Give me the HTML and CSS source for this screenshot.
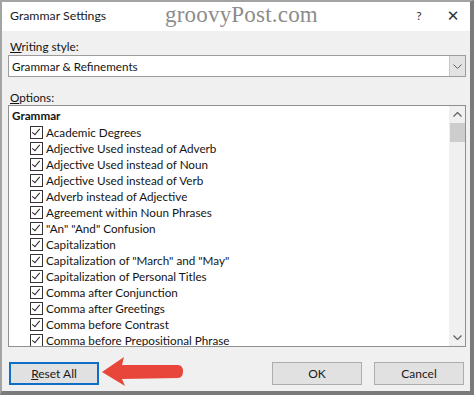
FILE: index.html
```html
<!DOCTYPE html>
<html>
<head>
<meta charset="utf-8">
<link rel="stylesheet" href="styles.css">
</head>
<body>
<div class="window">
  <div class="titlebar">
    <span class="title">Grammar Settings</span>
    <span class="tb-btns"><span class="help">?</span><span class="close">✕</span></span>
  </div>
  <span class="watermark">groovyPost.com</span>
  <div class="content">
    <div class="label"><u>W</u>riting style:</div>
    <div class="select">
      <span class="select-text">Grammar &amp; Refinements</span>
      <span class="select-btn"><svg width="9" height="5" viewBox="0 0 9 5"><path d="M0.5 0.5 L4.5 4.5 L8.5 0.5" fill="none" stroke="#606060" stroke-width="1"/></svg></span>
    </div>
    <div class="label label2"><u>O</u>ptions:</div>
    <div class="listbox">
      <div class="list">
        <div class="group">Grammar</div>
        <div class="item"><span class="cb"></span>Academic Degrees</div>
        <div class="item"><span class="cb"></span>Adjective Used instead of Adverb</div>
        <div class="item"><span class="cb"></span>Adjective Used instead of Noun</div>
        <div class="item"><span class="cb"></span>Adjective Used instead of Verb</div>
        <div class="item"><span class="cb"></span>Adverb instead of Adjective</div>
        <div class="item"><span class="cb"></span>Agreement within Noun Phrases</div>
        <div class="item"><span class="cb"></span>"An" "And" Confusion</div>
        <div class="item"><span class="cb"></span>Capitalization</div>
        <div class="item"><span class="cb"></span>Capitalization of "March" and "May"</div>
        <div class="item"><span class="cb"></span>Capitalization of Personal Titles</div>
        <div class="item"><span class="cb"></span>Comma after Conjunction</div>
        <div class="item"><span class="cb"></span>Comma after Greetings</div>
        <div class="item"><span class="cb"></span>Comma before Contrast</div>
        <div class="item"><span class="cb"></span>Comma before Prepositional Phrase</div>
      </div>
      <div class="scrollbar">
        <span class="sb-arrow"><svg width="9" height="5" viewBox="0 0 9 5"><path d="M0.5 4.5 L4.5 0.5 L8.5 4.5" fill="none" stroke="#606060" stroke-width="1.2"/></svg></span>
        <span class="thumb"></span>
        <span class="sb-fill"></span>
        <span class="sb-arrow"><svg width="9" height="5" viewBox="0 0 9 5"><path d="M0.5 0.5 L4.5 4.5 L8.5 0.5" fill="none" stroke="#606060" stroke-width="1.2"/></svg></span>
      </div>
    </div>
    <div class="buttons">
      <button class="btn btn-default"><u>R</u>eset All</button>
      <span class="spacer"></span>
      <button class="btn">OK</button>
      <button class="btn">Cancel</button>
    </div>
  </div>
  <svg class="red-arrow" width="86" height="32" viewBox="0 0 86 32">
    <path d="M2 17 L24 2 L22 10 L78 10 Q83 10 83 16.5 Q83 23 78 23 L22 24 L25 31 Z" fill="#e8463a"/>
  </svg>
</div>
</body>
</html>
```
FILE: styles.css
```css
html, body {
  margin: 0;
  padding: 0;
}
body {
  font-family: Lato, "Noto Sans", sans-serif;
  font-size: 11.7px;
  color: #141414;
  background: #f0f0f0;
}
.window {
  position: relative;
  width: 474px;
  height: 395px;
  box-sizing: border-box;
  border-top: 2px solid #a3a3a3;
  border-left: 2px solid #a3a3a3;
  border-right: 4px solid #7a7a7a;
  border-bottom: 4px solid #7a7a7a;
  background: #f0f0f0;
  display: flex;
  flex-direction: column;
}
.titlebar {
  height: 29px;
  background: #ffffff;
  display: flex;
  align-items: center;
  justify-content: space-between;
  padding: 0 0 0 8px;
  font-size: 12.3px;
  color: #1a1a1a;
}
.title {
  margin-top: -2px;
}
.tb-btns {
  display: flex;
  align-items: center;
}
.help {
  font-size: 12px;
  width: 20px;
  text-align: center;
  color: #333;
  margin-right: 14px;
  margin-top: -2px;
}
.close {
  font-size: 15px;
  width: 20px;
  text-align: center;
  color: #333;
  margin-right: 7px;
  margin-top: -2px;
  font-family: "DejaVu Sans", sans-serif;
}
.watermark {
  position: absolute;
  left: 163px;
  top: 0px;
  font-family: "Liberation Serif", serif;
  font-size: 23px;
  color: #8c8c8c;
  letter-spacing: 0.2px;
}
.content {
  padding: 7px 4px 0 6px;
  display: flex;
  flex-direction: column;
  flex: 1;
}
.label {
  height: 16px;
  line-height: 16px;
  padding-left: 2px;
}
.label2 {
  margin-top: 12px;
}
.select {
  margin-top: 1px;
  height: 22px;
  box-sizing: border-box;
  border: 1px solid #9c9c9c;
  background: #fff;
  display: flex;
  align-items: center;
  justify-content: space-between;
  padding-left: 3px;
}
.select-btn {
  width: 16px;
  height: 20px;
  box-sizing: border-box;
  background: #e3e3e3;
  border-left: 1px solid #c8c8c8;
  display: flex;
  align-items: center;
  justify-content: center;
}
.listbox {
  margin-top: 0px;
  height: 242px;
  box-sizing: border-box;
  border: 1px solid #8f8f8f;
  background: #fff;
  display: flex;
  overflow: hidden;
}
.list {
  flex: 1;
  padding-top: 1px;
}
.group {
  font-weight: bold;
  height: 17px;
  line-height: 17px;
  padding-left: 3px;
}
.item {
  height: 16px;
  display: flex;
  align-items: center;
  padding-left: 21px;
}
.cb {
  width: 11px;
  height: 11px;
  border: 1px solid #333;
  margin-right: 3px;
  position: relative;
  flex: none;
}
.cb::after {
  content: "";
  position: absolute;
  left: 3px;
  top: 0px;
  width: 3px;
  height: 7px;
  border-right: 1.3px solid #222;
  border-bottom: 1.3px solid #222;
  transform: rotate(40deg);
}
.scrollbar {
  width: 16px;
  background: #f0f0f0;
  display: flex;
  flex-direction: column;
  align-items: center;
}
.sb-arrow {
  height: 17px;
  display: flex;
  align-items: center;
  justify-content: center;
}
.thumb {
  width: 15px;
  height: 19px;
  background: #cdcdcd;
}
.sb-fill {
  flex: 1;
}
.buttons {
  margin-top: 15px;
  display: flex;
  gap: 12px;
  padding-right: 2px;
}
.spacer {
  flex: 1;
}
.btn {
  width: 90px;
  height: 23px;
  box-sizing: border-box;
  border: 1px solid #adadad;
  background: #e1e1e1;
  font-family: Lato, "Noto Sans", sans-serif;
  font-size: 12px;
  color: #1a1a1a;
  padding: 0;
  margin: 0;
}
.btn-default {
  border: 2px solid #0f6fc6;
  margin-left: 1px;
}
.red-arrow {
  position: absolute;
  left: 98px;
  top: 353px;
}
```
